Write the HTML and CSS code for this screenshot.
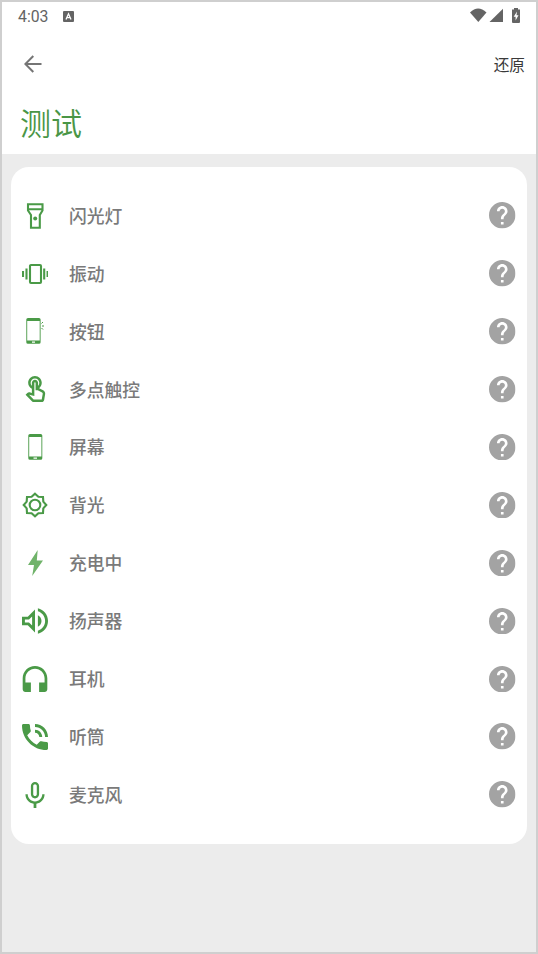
FILE: index.html
```html
<!DOCTYPE html>
<html lang="zh-CN">
<head>
<meta charset="utf-8">
<title>测试</title>
<link rel="stylesheet" href="styles.css">
</head>
<body>
<svg class="defs" aria-hidden="true">
  <symbol id="help" viewBox="2 2 20 20"><path d="M12 2C6.480 2 2 6.480 2 12s4.480 10 10 10 10-4.480 10-10S17.520 2 12 2zm1 17h-2v-2h2v2zm2.070-7.750l-.9.920C13.450 12.900 13 13.500 13 15h-2v-.5c0-1.100.45-2.100 1.170-2.830l1.240-1.260c.37-.36.59-.86.59-1.410 0-1.100-.9-2-2-2s-2 .9-2 2H8c0-2.210 1.790-4 4-4s4 1.790 4 4c0 .88-.36 1.680-.93 2.250z"/></symbol>
</svg>
<div class="screen">
  <header class="top">
    <div class="status">
      <span class="clock">4:03</span>
      <svg class="badge" viewBox="0 0 11 11"><rect width="11" height="11" rx="1" fill="#646464"/><path d="M3 8.500L5.500 2.800L8 8.500M4 6.700H7" fill="none" stroke="#fff" stroke-width="1.300"/></svg>
      <svg class="signals" viewBox="0 0 51 16" fill="#646464"><path d="M0 4.500Q8-3.500 16.500 4.500L8.300 14z"/><path d="M33 .8V14H19.500z"/><path d="M44 0h4v1.500h2V14q0 1-1 1h-6q-1 0-1-1V1.500h2z"/><path d="M47 3.500L43.700 8.700h1.900V12.500L48.500 7.200h-2z" fill="#fff"/></svg>
    </div>
    <nav class="bar">
      <svg class="back" viewBox="0 0 18 18"><path d="M17.500 9H1.500M9.300 1L1.300 9L9.300 17" fill="none" stroke="#757575" stroke-width="2"/></svg>
      <span class="reset">还原</span>
    </nav>
    <h1>测试</h1>
  </header>
  <main>
    <ul class="card">
      <li><svg class="icon" viewBox="0 0 26 26"><path class="line" d="M6 1.300H20.500V7.500L17.800 12V24.700H9V12L6 7.500ZM6 6.300H20.500"/><circle cx="13.200" cy="15.500" r="2"/></svg><span>闪光灯</span><svg class="help"><use href="#help"/></svg></li>
      <li><svg class="icon" viewBox="0 0 26 26"><rect class="line" x="8" y="4" width="11" height="18" rx="1"/><path class="line" d="M4.500 7.400V18.500M1 10V16M22.200 7.400V18.500M25.600 10V16"/></svg><span>振动</span><svg class="help"><use href="#help"/></svg></li>
      <li><svg class="icon" viewBox="0 0 26 26"><path fill-rule="evenodd" d="M6 0H17Q18.600 0 18.600 1.600V24.200Q18.600 25.800 17 25.800H6Q4.300 25.800 4.300 24.200V1.600Q4.300 0 6 0ZM5.200 3V22.500H17.700V3ZM10 23.500V24.700H13V23.500Z"/><path class="thin" d="M19.500 5.500L21 4M20 8H22M19.500 10L21 11.500"/></svg><span>按钮</span><svg class="help"><use href="#help"/></svg></li>
      <li><svg class="icon" viewBox="1.100 1 21 21"><path d="M18.190 12.440l-3.240-1.620c1.290-1 2.120-2.560 2.120-4.320 0-3.030-2.470-5.500-5.500-5.500s-5.500 2.470-5.500 5.500c0 2.130 1.220 3.980 3 4.890v3.260c-2.150-.46-2.020-.44-2.260-.44-.53 0-1.030.21-1.410.59L4 16.220l5.090 5.090c.43.44 1.030.69 1.650.69h6.300c.98 0 1.810-.7 1.970-1.670l.8-4.710c.22-1.300-.43-2.580-1.620-3.180zm-.35 2.850l-.8 4.710h-6.300c-.09 0-.17-.04-.24-.1l-3.680-3.680 4.250.89V6.500c0-.28.22-.5.5-.5s.5.22.5.5v6h1.760l3.460 1.730c.4.2.62.63.55 1.060zM8.070 6.500c0-1.930 1.570-3.500 3.500-3.500s3.500 1.570 3.500 3.500c0 .95-.38 1.810-1 2.440V6.500c0-1.380-1.120-2.500-2.500-2.500s-2.500 1.120-2.500 2.500v2.440c-.62-.63-1-1.490-1-2.440z"/></svg><span>多点触控</span><svg class="help"><use href="#help"/></svg></li>
      <li><svg class="icon" viewBox="0 0 26 26"><path fill-rule="evenodd" d="M8 0H18.700Q20.300 0 20.300 1.600V24.200Q20.300 25.800 18.700 25.800H8Q6.300 25.800 6.300 24.200V1.600Q6.300 0 8 0ZM7.200 3V22.500H19.400V3ZM11.500 23.500V24.700H15V23.500Z"/></svg><span>屏幕</span><svg class="help"><use href="#help"/></svg></li>
      <li><svg class="icon" viewBox="0 0 26 26"><path class="line" d="M13 1.700L16.400 4.700L21 5L21.300 9.600L24.300 13L21.300 16.400L21 21L16.400 21.300L13 24.300L9.600 21.300L5 21L4.700 16.400L1.700 13L4.700 9.600L5 5L9.600 4.700Z"/><circle class="line" cx="13" cy="13" r="5.300"/></svg><span>背光</span><svg class="help"><use href="#help"/></svg></li>
      <li><svg class="icon bolt" viewBox="0 0 26 26"><path d="M15.700 0L6 15H12L10.200 26L21 10.500H14.800Z"/></svg><span>充电中</span><svg class="help"><use href="#help"/></svg></li>
      <li><svg class="icon" viewBox="3 3 18 18"><path d="M3 9v6h4l5 5V4L7 9H3zm7-.17v6.340L7.830 13H5v-2h2.830L10 8.830zM16.500 12c0-1.770-1.020-3.290-2.500-4.030v8.050c1.480-.73 2.500-2.250 2.500-4.020zM14 3.230v2.060c2.890.86 5 3.540 5 6.710s-2.110 5.850-5 6.710v2.060c4.010-.91 7-4.490 7-8.770 0-4.280-2.990-7.860-7-8.770z"/></svg><span>扬声器</span><svg class="help"><use href="#help"/></svg></li>
      <li><svg class="icon" viewBox="2.500 1 19 19"><path d="M12 1c-4.970 0-9 4.030-9 9v8c0 1.100.9 2 2 2h4v-7H5v-3c0-3.870 3.130-7 7-7s7 3.130 7 7v3h-4v7h4c1.100 0 2-.9 2-2v-8c0-4.970-4.030-9-9-9z"/></svg><span>耳机</span><svg class="help"><use href="#help"/></svg></li>
      <li><svg class="icon" viewBox="3 3 18 18"><path d="M20 15.500c-1.250 0-2.450-.2-3.570-.57-.35-.11-.74-.03-1.020.24l-2.200 2.200c-2.830-1.440-5.150-3.750-6.590-6.590l2.200-2.210c.28-.26.36-.65.25-1C8.700 6.450 8.500 5.250 8.500 4c0-.55-.45-1-1-1H4c-.55 0-1 .45-1 1 0 9.390 7.610 17 17 17 .55 0 1-.45 1-1v-3.500c0-.55-.45-1-1-1zM19 12h2c0-4.970-4.030-9-9-9v2c3.870 0 7 3.130 7 7zm-4 0h2c0-2.760-2.240-5-5-5v2c1.660 0 3 1.340 3 3z"/></svg><span>听筒</span><svg class="help"><use href="#help"/></svg></li>
      <li><svg class="icon" viewBox="2.500 2 19 19"><path d="M12 14c1.660 0 3-1.340 3-3V5c0-1.660-1.340-3-3-3S9 3.340 9 5v6c0 1.660 1.340 3 3 3zm-1.300-9c0-.7.6-1.300 1.300-1.300s1.300.6 1.300 1.300v6c0 .7-.6 1.300-1.300 1.300s-1.300-.6-1.300-1.300V5zm6.600 6c0 2.900-2.400 5.200-5.300 5.200S6.700 13.900 6.700 11H5c0 3.530 2.610 6.430 6 6.920V21h2v-3.080c3.390-.49 6-3.390 6-6.920h-1.700z"/></svg><span>麦克风</span><svg class="help"><use href="#help"/></svg></li>
    </ul>
  </main>
</div>
</body>
</html>
```

FILE: styles.css
```css
* { box-sizing: border-box; }
body { margin: 0; font-family: Roboto, "Noto Sans CJK SC", sans-serif; }
.defs { display: none; }
.screen {
  height: 954px;
  border: 2px solid #cfcfcf;
  background: #ececec;
  overflow: hidden;
}
.top { height: 151.500px; background: #fff; }
.status { display: flex; align-items: center; height: 28px; padding: 0 15px 0 16px; }
.clock { width: 45px; font-size: 15.800px; color: #646464; }
.badge { width: 11px; height: 11px; }
.signals { width: 51px; height: 16px; margin-left: auto; }
.bar { display: flex; align-items: center; justify-content: space-between; height: 68px; padding: 0 11px 0 22px; }
.back { width: 18px; height: 18px; }
.reset { font-size: 15.700px; color: #3a3a3a; }
h1 { margin: 0; padding-left: 18px; font-size: 31px; line-height: 54px; font-weight: 350; color: #4a9646; }
main { padding: 13.500px 9px; }
.card { height: 677px; margin: 0; padding: 19.700px 11.500px 0 11px; list-style: none; background: #fff; border-radius: 18px; }
.card li { display: flex; align-items: center; height: 57.900px; font-size: 17.800px; font-weight: 500; color: #7a7a7a; }
.card span { padding-bottom: 1.600px; }
.icon { width: 26px; height: 26px; margin-right: 21px; fill: #4a9a47; }
.icon .line { fill: none; stroke: #4a9a47; stroke-width: 2.100; }
.icon .thin { fill: none; stroke: #4a9a47; stroke-width: 1; }
.icon.bolt { fill: #70b36a; }
.help { width: 26.500px; height: 26.500px; margin-left: auto; fill: #a3a3a3; }
```
